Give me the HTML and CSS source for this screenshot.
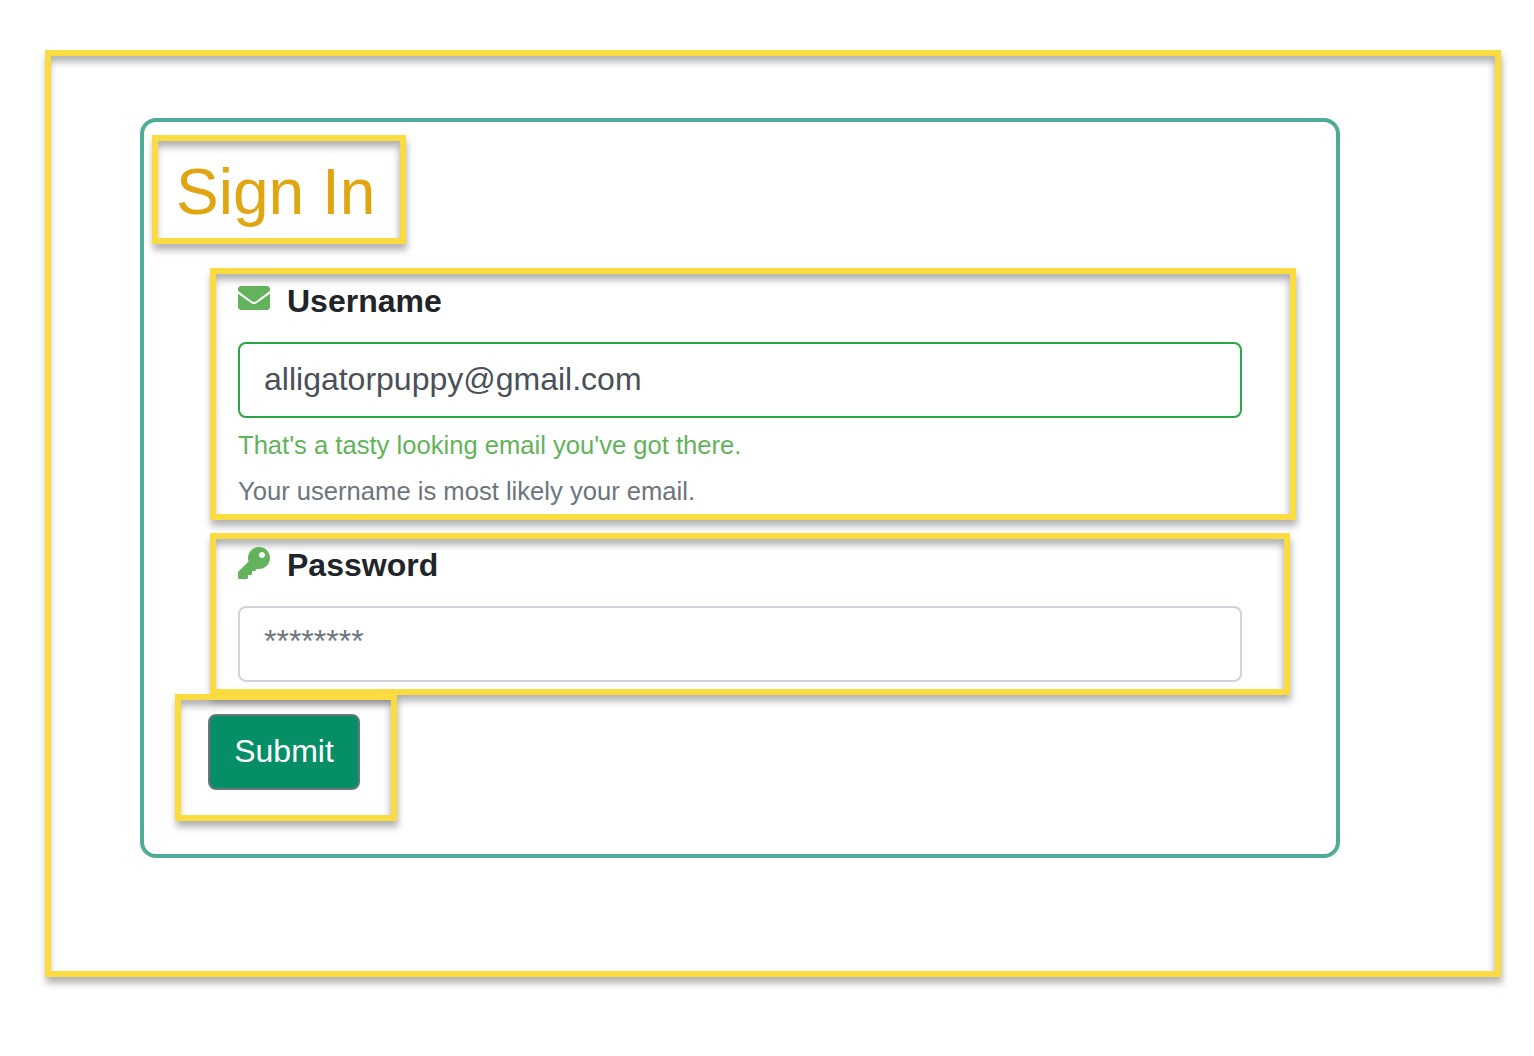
FILE: index.html
```html
<!DOCTYPE html>
<html lang="en">
<head>
<meta charset="utf-8">
<title>Sign In</title>
<link rel="stylesheet" href="styles.css">
</head>
<body>
<main class="zone page-zone">
  <form class="card">
    <div class="zone title-zone"><h1 class="title">Sign In</h1></div>
    <div class="zone field-zone username-zone">
      <label class="field-label" for="username">
        <svg class="icon" viewBox="0 0 512 512" aria-hidden="true"><path d="M502.3 190.8c3.9-3.1 9.7-.2 9.7 4.7V400c0 26.5-21.5 48-48 48H48c-26.5 0-48-21.5-48-48V195.6c0-5 5.7-7.8 9.7-4.7 22.4 17.4 52.1 39.5 154.1 113.6 21.1 15.4 56.7 47.8 92.2 47.6 35.7.3 72-32.8 92.3-47.6 102-74.1 131.6-96.3 154-113.7zM256 320c23.2.4 56.6-29.2 73.4-41.4 132.7-96.3 142.8-104.7 173.4-128.7 5.8-4.5 9.2-11.5 9.2-18.9v-19c0-26.5-21.5-48-48-48H48C21.5 64 0 85.5 0 112v19c0 7.4 3.4 14.3 9.2 18.9 30.6 23.9 40.7 32.4 173.4 128.7 16.8 12.2 50.2 41.8 73.4 41.4z"/></svg>
        <span>Username</span>
      </label>
      <input class="control control-valid" id="username" type="text" value="alligatorpuppy@gmail.com">
      <p class="help help-valid">That's a tasty looking email you've got there.</p>
      <p class="help help-muted">Your username is most likely your email.</p>
    </div>
    <div class="zone field-zone password-zone">
      <label class="field-label" for="password">
        <svg class="icon" viewBox="0 0 512 512" aria-hidden="true"><path d="M512 176.001C512 273.203 433.202 352 336 352c-11.22 0-22.19-1.062-32.827-3.069l-24.012 27.014A23.999 23.999 0 0 1 261.223 384H224v40c0 13.255-10.745 24-24 24h-40v40c0 13.255-10.745 24-24 24H24c-13.255 0-24-10.745-24-24v-78.059c0-6.365 2.529-12.47 7.029-16.971l161.802-161.802C163.108 213.814 160 195.271 160 176 160 78.798 238.797.001 335.999 0 433.488-.001 512 78.511 512 176.001zM336 128c0 26.51 21.49 48 48 48s48-21.49 48-48-21.49-48-48-48-48 21.49-48 48z"/></svg>
        <span>Password</span>
      </label>
      <input class="control control-hidden" id="password" type="password" placeholder="********">
    </div>
    <div class="zone submit-zone"><button class="submit" type="button">Submit</button></div>
  </form>
</main>
</body>
</html>
```
FILE: styles.css
```css
* { box-sizing: border-box; }

html, body { margin: 0; padding: 0; }

body {
  background: #fff;
  font-family: "Liberation Sans", Arial, sans-serif;
  color: #212529;
  padding: 50px 33px 0 45px;
  height: 1056px;
  overflow: hidden;
}

.zone {
  border: 6px solid #fbdc40;
  box-shadow: 1px 6px 7px rgba(0, 0, 0, .3), inset -1px 6px 7px rgba(0, 0, 0, .3);
}

.page-zone {
  width: 1456px;
  height: 927px;
  padding: 62px 0 0 89px;
}

.card {
  width: 1200px;
  height: 740px;
  border: 4px solid #4dab97;
  border-radius: 16px;
  padding: 13px 0 0 8px;
}

.title-zone {
  width: 254px;
  height: 109px;
  padding-left: 18px;
}

.title {
  margin: 0;
  font-size: 64px;
  font-weight: 400;
  line-height: 102px;
  color: #e0a612;
}

.field-zone {
  margin-left: 58px;
  padding: 0 0 0 22px;
}

.username-zone {
  width: 1086px;
  height: 252px;
  margin-top: 24px;
}

.password-zone {
  width: 1080px;
  height: 162px;
  margin-top: 13px;
}

.password-zone .field-label {
  height: 53px;
  line-height: 53px;
}

.field-label {
  display: flex;
  align-items: center;
  gap: 17px;
  height: 54px;
  font-size: 32px;
  font-weight: 700;
  line-height: 54px;
}

.icon {
  width: 32px;
  height: 32px;
  fill: #62b35b;
  margin-top: -6px;
}

.control {
  display: block;
  width: 1004px;
  height: 76px;
  margin-top: 14px;
  padding: 0 24px;
  border: 2px solid #ced4da;
  border-radius: 8px;
  background: #fff;
  font-family: inherit;
  font-size: 32px;
  color: #495057;
  outline: none;
}

.control::placeholder { color: #6c757d; opacity: 1; }

.control-valid {
  border-color: #28a745;
  padding-bottom: 2px;
}

.control-hidden { padding-bottom: 6px; }

.help {
  margin: 0;
  font-size: 25.6px;
  line-height: 30px;
}

.help-valid { color: #62b35b; margin-top: 12px; }

.help-muted { color: #6c757d; margin-top: 16px; }

.submit-zone {
  width: 222px;
  height: 127px;
  margin: -1px 0 0 23px;
  padding: 14px 0 0 27px;
  position: relative;
}

.submit {
  display: block;
  width: 152px;
  height: 76px;
  padding: 0 0 2px;
  border: 2px solid #6c757d;
  border-radius: 8px;
  background: #068e66;
  color: #fff;
  font-family: inherit;
  font-size: 32px;
}
```
